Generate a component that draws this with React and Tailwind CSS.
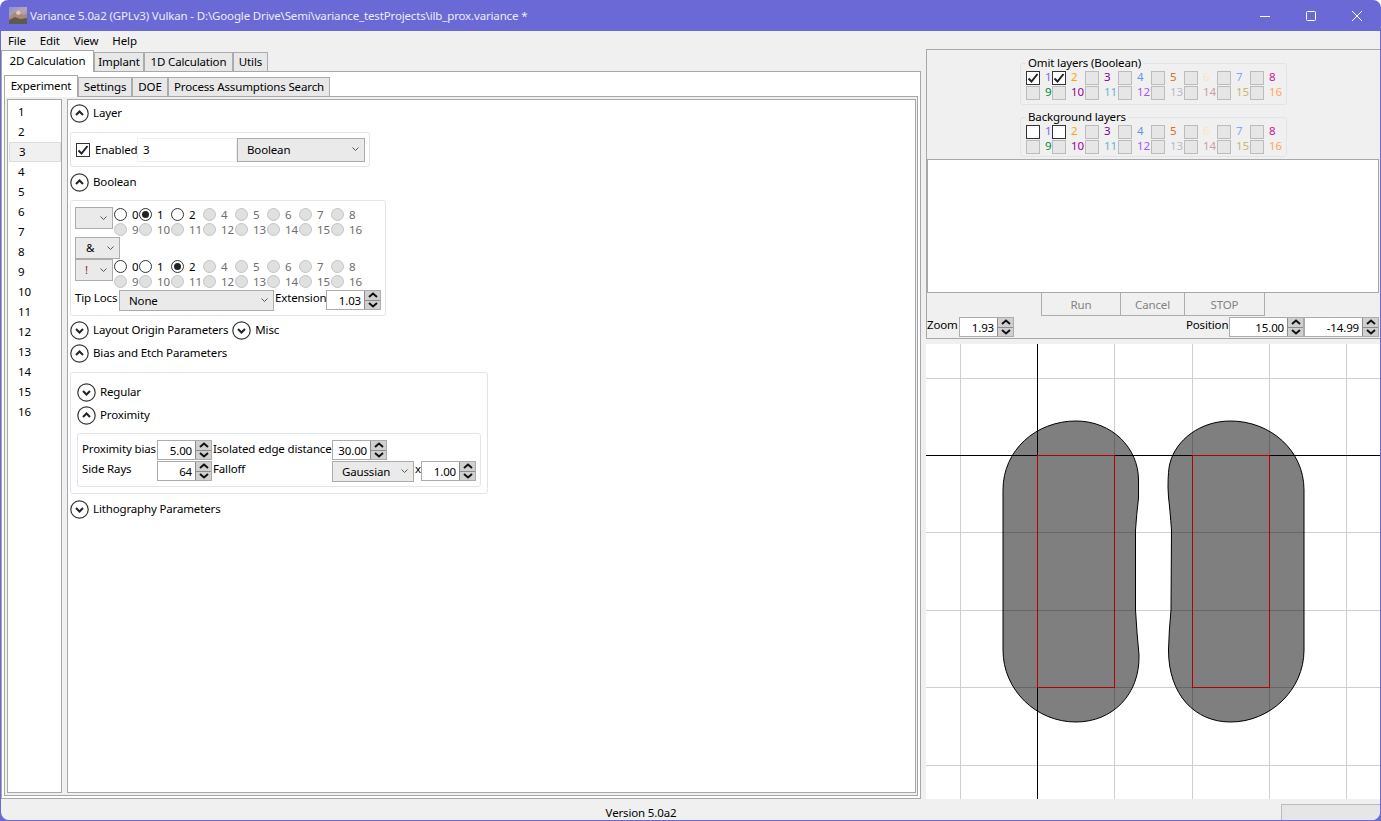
const LAYER_COLORS = [
  "#8a5cff", "#ffa500", "#7b0099", "#6495ed", "#e06a20", "#ffe4c4", "#87a5ff", "#d41493",
  "#008a3c", "#990099", "#66b3d0", "#a855f7", "#b9b9c8", "#c9a0a0", "#c8b870", "#ffa560",
];

const LIST = ["1", "2", "3", "4", "5", "6", "7", "8", "9", "10", "11", "12", "13", "14", "15", "16"];
const RADIO_LABELS = ["0", "1", "2", "4", "5", "6", "7", "8", "9", "10", "11", "12", "13", "14", "15", "16"];

function Disclosure({ open, label, iconClass = "" }) {
  return (
    <div className="flex h-5 items-center gap-[4px]">
      <svg width="19" height="19" viewBox="0 0 19 19" className={iconClass}>
        <circle cx="9.5" cy="9.5" r="8.7" fill="white" stroke="#333" strokeWidth="1.2" />
        <path
          d={open ? "M6 11 L9.5 7.5 L13 11" : "M6 8 L9.5 11.5 L13 8"}
          fill="none"
          stroke="#222"
          strokeWidth="2"
        />
      </svg>
      <span>{label}</span>
    </div>
  );
}

function Chevron() {
  return (
    <svg width="7" height="5" viewBox="0 0 7 5" className="shrink-0">
      <path d="M0.5 0.5 L3.5 3.5 L6.5 0.5" fill="none" stroke="#555" strokeWidth="1" />
    </svg>
  );
}

function Select({ value, className = "", textClass = "" }) {
  return (
    <div className={`flex items-center justify-between border border-[#acacac] bg-[#eaeaea] pr-[5px] ${className}`}>
      <span className={textClass}>{value}</span>
      <Chevron />
    </div>
  );
}

function Spin({ value, className = "w-[55px]" }) {
  return (
    <div className={`flex h-[20px] shrink-0 border border-[#acacac] bg-white ${className}`}>
      <div className="min-w-0 flex-1 pr-[3px] pt-[1px] text-right leading-[18px]">{value}</div>
      <div className="flex w-[16px] flex-col border-l border-[#8c8c8c]">
        <div className="flex flex-1 items-center justify-center border-b border-[#8c8c8c] bg-[#d0d0d0]">
          <svg width="10" height="6" viewBox="0 0 10 6">
            <path d="M1 5 L5 1.5 L9 5" fill="none" stroke="#111" strokeWidth="2" />
          </svg>
        </div>
        <div className="flex flex-1 items-center justify-center bg-[#d0d0d0]">
          <svg width="10" height="6" viewBox="0 0 10 6">
            <path d="M1 1 L5 4.5 L9 1" fill="none" stroke="#111" strokeWidth="2" />
          </svg>
        </div>
      </div>
    </div>
  );
}

function Check({ checked, enabled }) {
  return (
    <div
      className={`flex h-[14px] w-[14px] shrink-0 items-center justify-center border ${
        enabled ? "border-[#333] bg-white" : "border-[#bcbcbc] bg-[#e6e6e6]"
      }`}
    >
      {checked && (
        <svg width="12" height="12" viewBox="0 0 12 12">
          <path d="M1.5 6.5 L4.5 9.5 L10.5 2" fill="none" stroke="#222" strokeWidth="2" />
        </svg>
      )}
    </div>
  );
}

function RadioGrid({ checkedIndex }) {
  return (
    <div className="ml-px grid grid-cols-[25px_repeat(7,32px)] auto-rows-[15px]">
      {RADIO_LABELS.map((label, i) => {
        const enabled = i < 3;
        return (
          <div key={i} className="flex items-center gap-[5px]">
            <div
              className={`flex h-[13px] w-[13px] shrink-0 items-center justify-center rounded-full border ${
                enabled ? "border-[#333] bg-white" : "border-[#c4c4c4] bg-[#e0e0e0]"
              }`}
            >
              {i === checkedIndex && <div className="h-[7px] w-[7px] rounded-full bg-[#222]" />}
            </div>
            <span className={enabled ? "text-black" : "text-[#6d6d6d]"}>{label}</span>
          </div>
        );
      })}
    </div>
  );
}

function LayerGroup({ title, omit, className = "" }) {
  return (
    <div className={`relative w-[267px] rounded-[3px] border border-[#dfe5ea] pl-[5px] pt-[6px] ${className}`}>
      <div className="absolute left-[5px] top-[-9px] bg-[#f0f0f0] px-[2px] leading-4">{title}</div>
      <div className="grid grid-cols-[26px_repeat(7,33px)] auto-rows-[15px]">
        {LAYER_COLORS.map((color, i) => (
          <div key={i} className="flex items-center gap-[5px]">
            <Check enabled={i < 2} checked={omit && i < 2} />
            <span className="-mt-px" style={{ color }}>{i + 1}</span>
          </div>
        ))}
      </div>
    </div>
  );
}

function Tab({ label, active, className = "" }) {
  return (
    <div
      className={`flex items-center justify-center border border-b-0 ${
        active
          ? "z-10 -mb-px h-[22px] border-[#a8a8a8] bg-white pb-[2px]"
          : "h-[19px] border-[#acacac] bg-[#e8e8e8]"
      } ${className}`}
    >
      {label}
    </div>
  );
}

function WindowIcon() {
  return (
    <svg width="18" height="17" viewBox="0 0 18 17">
      <defs>
        <linearGradient id="sky" x1="0" y1="0" x2="1" y2="1">
          <stop offset="0" stopColor="#8d93c9" />
          <stop offset="0.5" stopColor="#b8a5b5" />
          <stop offset="1" stopColor="#7a8ab8" />
        </linearGradient>
      </defs>
      <rect width="18" height="17" fill="url(#sky)" />
      <path d="M0 10 L5 6 L9 4 L14 8 L18 7 L18 17 L0 17 Z" fill="#a98a78" />
      <path d="M0 13 L6 10 L11 12 L18 11 L18 17 L0 17 Z" fill="#5d5a50" />
      <path d="M7 5 L10 3 L12 7 L8 8 Z" fill="#e6c9b8" />
    </svg>
  );
}

function Viewport() {
  const vertical = [960, 1114, 1192, 1269, 1346];
  const horizontal = [378, 532, 610, 687, 765];
  return (
    <svg width="454" height="455" viewBox="926 344 454 455" className="block bg-white">
      {vertical.map((x) => (
        <line key={x} x1={x + 0.5} x2={x + 0.5} y1="344" y2="799" stroke="#cfcfcf" />
      ))}
      {horizontal.map((y) => (
        <line key={y} x1="926" x2="1380" y1={y + 0.5} y2={y + 0.5} stroke="#cfcfcf" />
      ))}
      <line x1="1037.5" x2="1037.5" y1="344" y2="799" stroke="#000" />
      <line x1="926" x2="1380" y1="455.5" y2="455.5" stroke="#000" />
      <path
        d="M1076 421 C1112 421 1138.5 448 1138.5 480 L1138.5 498 Q1136.5 515 1135.5 530 L1135.5 610 Q1137 635 1139 655 C1140 695 1112 722 1076 722 C1036 722 1003 690 1003 650 L1003 490 C1003 450 1036 421 1076 421 Z"
        fill="rgba(0,0,0,0.5)"
        stroke="#000"
      />
      <path
        d="M1230.5 421 C1270 421 1304 450 1304 490 L1304 650 C1304 690 1270 722 1230.5 722 C1195 722 1168.5 695 1168.5 650 Q1169 630 1171 610 L1171.5 530 Q1170 510 1168.5 497 L1168 487 Q1168 470 1170 463 C1176 440 1200 421 1230.5 421 Z"
        fill="rgba(0,0,0,0.5)"
        stroke="#000"
      />
      <rect x="1037.5" y="455.5" width="77" height="232" fill="none" stroke="#b40000" />
      <rect x="1192.5" y="455.5" width="77" height="232" fill="none" stroke="#b40000" />
    </svg>
  );
}

export default function App() {
  return (
    <div className="flex h-[821px] w-[1381px] flex-col overflow-hidden rounded-t-lg bg-[#6b69d6] font-['Noto_Sans',sans-serif] text-[11.5px] tracking-[-0.15px] text-black">
      {/* title bar */}
      <div className="flex h-[31px] shrink-0 items-center pl-[9px] text-[#ececf8]">
        <WindowIcon />
        <span className="ml-[3px]">Variance 5.0a2 (GPLv3) Vulkan - D:\Google Drive\Semi\variance_testProjects\ilb_prox.variance *</span>
        <div className="ml-auto flex pr-px">
          <div className="flex h-[31px] w-[46px] items-center justify-center">
            <svg width="10" height="10" viewBox="0 0 10 10"><path d="M0 5.5 H10" stroke="white" /></svg>
          </div>
          <div className="flex h-[31px] w-[46px] items-center justify-center">
            <svg width="10" height="10" viewBox="0 0 10 10"><rect x="0.5" y="0.5" width="9" height="9" rx="1" fill="none" stroke="white" /></svg>
          </div>
          <div className="flex h-[31px] w-[46px] items-center justify-center">
            <svg width="10" height="10" viewBox="0 0 10 10"><path d="M0 0 L10 10 M10 0 L0 10" stroke="white" /></svg>
          </div>
        </div>
      </div>

      <div className="mx-px mb-px flex min-h-0 flex-1 flex-col rounded-b-lg bg-[#f0f0f0]">
        <div className="flex h-[768px] shrink-0">
          {/* left column */}
          <div className="flex w-[920px] shrink-0 flex-col">
            <div className="flex h-5 items-center gap-[14px] pl-[7px]">
              <span>File</span>
              <span>Edit</span>
              <span>View</span>
              <span>Help</span>
            </div>
            <div className="flex h-5 items-end">
              <Tab label="2D Calculation" active className="w-[93px]" />
              <Tab label="Implant" className="w-[50px]" />
              <Tab label="1D Calculation" className="w-[89px]" />
              <Tab label="Utils" className="w-[35px]" />
            </div>
            <div className="flex min-h-0 flex-1 flex-col border border-[#a8a8a8] bg-white px-[2px] pb-[2px] pt-[4px]">
              <div className="flex h-5 shrink-0 items-end">
                <Tab label="Experiment" active className="w-[74px]" />
                <Tab label="Settings" className="w-[54px]" />
                <Tab label="DOE" className="w-[36px]" />
                <Tab label="Process Assumptions Search" className="w-[162px]" />
              </div>
              <div className="flex min-h-0 flex-1 gap-[5px] border border-[#a8a8a8] bg-[#f0f0f0] pb-[2px] pl-[2px] pr-[1px] pt-[2px]">
                {/* layer list */}
                <div className="w-[55px] shrink-0 border border-[#a8a8a8] bg-white pl-px pt-[2px]">
                  {LIST.map((n) => (
                    <div
                      key={n}
                      className={`flex h-5 w-[52px] items-center pl-[9px] ${
                        n === "3" ? "border border-[#dcdcdc] bg-[#f0f0f0]" : ""
                      }`}
                    >
                      {n}
                    </div>
                  ))}
                </div>

                {/* experiment panel */}
                <div className="min-w-0 flex-1 border border-[#a8a8a8] bg-white pl-[2px] pt-[3px]">
                  <Disclosure open label="Layer" />
                  <div className="mt-[9px] flex h-[35px] w-[300px] items-center rounded-[3px] border border-[#dfe5ea] pl-[5px]">
                    <Check enabled checked />
                    <span className="ml-[5px] w-[42px] whitespace-nowrap">Enabled</span>
                    <div className="flex h-[24px] w-[100px] items-center border border-[#efefef] bg-white pl-[5px]">3</div>
                    <Select value="Boolean" className="h-[24px] w-[128px] pl-[9px]" />
                  </div>

                  <div className="mt-[5px]"><Disclosure open label="Boolean" /></div>
                  <div className="mt-[8px] h-[116px] w-[316px] rounded-[3px] border border-[#dfe5ea] pl-[4px] pt-[6px]">
                    <div className="flex h-[30px] items-start">
                      <Select value="" className="h-[22px] w-[38px]" />
                      <RadioGrid checkedIndex={1} />
                    </div>
                    <Select value="&" className="h-[22px] w-[45px] pl-[10px]" />
                    <div className="flex h-[31px] items-start">
                      <Select value="!" className="h-[22px] w-[38px] pl-[9px]" textClass="text-[#a02020]" />
                      <RadioGrid checkedIndex={2} />
                    </div>
                    <div className="flex h-[21px] items-start">
                      <span className="w-[44px] whitespace-nowrap leading-[16px]">Tip Locs</span>
                      <Select value="None" className="h-[21px] w-[155px] pl-[9px]" />
                      <span className="ml-px w-[51px] whitespace-nowrap leading-[16px]">Extension</span>
                      <Spin value="1.03" />
                    </div>
                  </div>

                  <div className="mt-[4px] flex gap-[4px]">
                    <Disclosure label="Layout Origin Parameters" />
                    <Disclosure label="Misc" />
                  </div>
                  <div className="mt-[3px]"><Disclosure open label="Bias and Etch Parameters" /></div>
                  <div className="mt-[9px] h-[122px] w-[418px] rounded-[3px] border border-[#dfe5ea] pl-[6px] pt-[9px]">
                    <Disclosure label="Regular" />
                    <div className="mt-[3px]"><Disclosure open label="Proximity" /></div>
                    <div className="mt-[8px] h-[54px] w-[404px] rounded-[3px] border border-[#dfe5ea] pl-[4px] pt-[6px]">
                      <div className="flex h-[21px] items-start">
                        <span className="w-[75px] whitespace-nowrap leading-[18px]">Proximity bias</span>
                        <Spin value="5.00" />
                        <span className="ml-px w-[119px] whitespace-nowrap leading-[18px]">Isolated edge distance</span>
                        <Spin value="30.00" />
                      </div>
                      <div className="flex h-[21px] items-start">
                        <span className="w-[75px] whitespace-nowrap leading-[16px]">Side Rays</span>
                        <Spin value="64" />
                        <span className="ml-px w-[119px] whitespace-nowrap leading-[16px]">Falloff</span>
                        <Select value="Gaussian" className="h-[21px] w-[82px] pl-[9px]" />
                        <span className="ml-px w-[6px] leading-[16px]">x</span>
                        <Spin value="1.00" />
                      </div>
                    </div>
                  </div>
                  <div className="mt-[5px]"><Disclosure label="Lithography Parameters" /></div>
                </div>
              </div>
            </div>
          </div>

          {/* right column */}
          <div className="ml-[5px] flex w-[454px] shrink-0 flex-col pt-[18px]">
            <div className="flex h-[290px] shrink-0 flex-col border border-r-0 border-[#a8a8a8] pt-[13px]">
              <LayerGroup title="Omit layers (Boolean)" omit className="ml-[93px] h-[42px]" />
              <LayerGroup title="Background layers" className="ml-[93px] mt-[12px] h-[40px]" />
              <div className="mt-[2px] h-[134px] w-[452px] border border-[#a8a8a8] bg-white" />
              <div className="ml-[114px] flex h-[23px] text-[#838383]">
                <div className="flex w-[80px] items-center justify-center border border-t-0 border-[#adadad] pt-[2px]">Run</div>
                <div className="flex w-[64px] items-center justify-center border-b border-r border-[#adadad] pt-[2px]">Cancel</div>
                <div className="flex w-[80px] items-center justify-center border-b border-r border-[#adadad] pt-[2px]">STOP</div>
              </div>
              <div className="flex h-[21px] items-start pt-px">
                <span className="w-[32px] leading-[16px]">Zoom</span>
                <Spin value="1.93" />
                <span className="ml-[171px] w-[44px] pl-px leading-[16px]">Position</span>
                <Spin value="15.00" className="w-[75px]" />
                <Spin value="-14.99" className="w-[75px]" />
              </div>
            </div>
            <div className="mt-[5px]"><Viewport /></div>
          </div>
        </div>

        {/* status bar */}
        <div className="flex min-h-0 flex-1">
          <div className="flex w-[1280px] items-center justify-center pt-[6px]">Version 5.0a2</div>
          <div className="ml-auto mt-[5px] h-[16px] w-[99px] rounded-br-lg border-l border-t border-[#bcbcbc] bg-[#e6e6e6]" />
        </div>
      </div>
    </div>
  );
}
